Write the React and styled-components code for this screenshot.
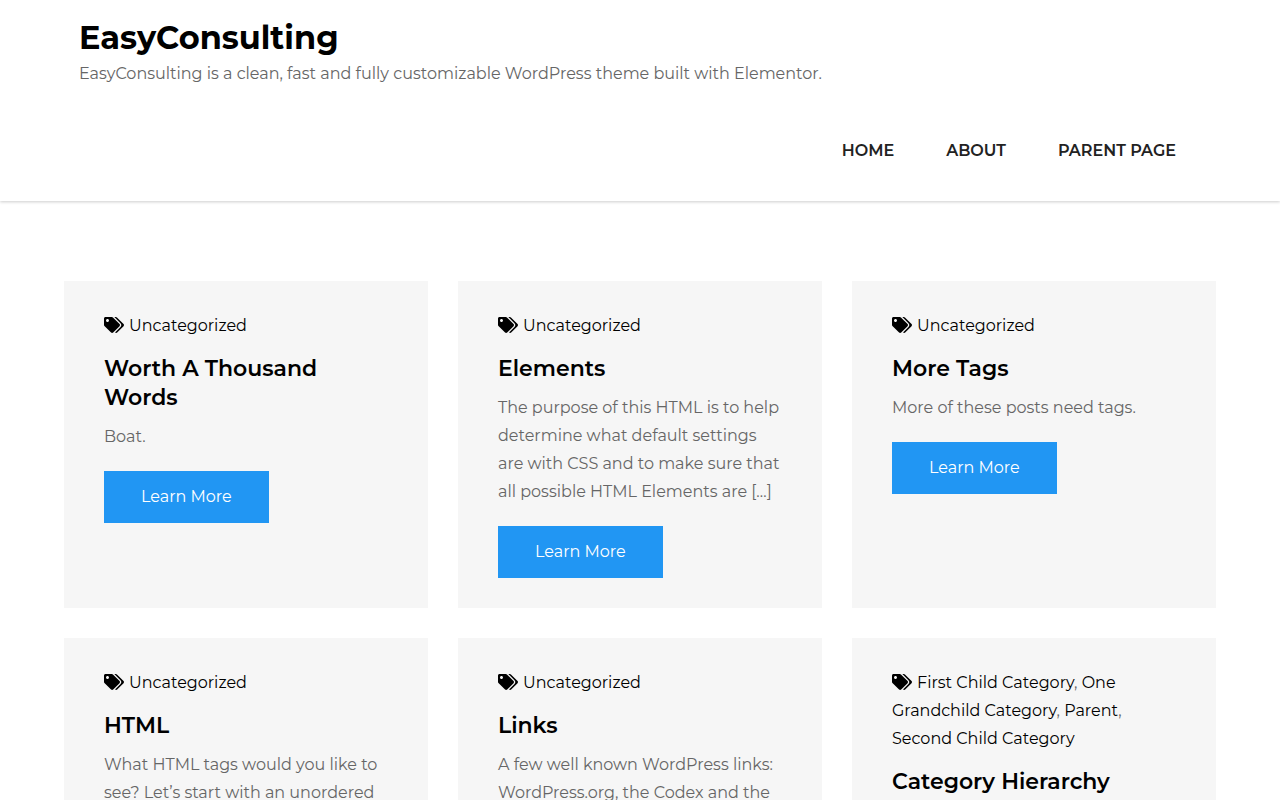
import React from 'react';
import styled, { createGlobalStyle } from 'styled-components';
import { FaTags } from 'react-icons/fa';

const GlobalStyle = createGlobalStyle`
  * {
    box-sizing: border-box;
  }

  body {
    margin: 0;
    background: #fff;
    color: #666;
    font-family: Montserrat, Inter, "Open Sans", sans-serif;
    font-size: 16px;
    font-weight: 400;
    line-height: 28px;
  }

  a {
    color: inherit;
    text-decoration: none;
  }
`;

const Header = styled.header`
  padding: 16px 0;
  background: #fff;
  box-shadow: 0 1px 3px rgba(0, 0, 0, 0.2);
`;

const Container = styled.div`
  width: 90%;
  margin: 0 auto;
`;

const Branding = styled.div`
  padding: 0 15px;
`;

const SiteTitle = styled.h1`
  margin: 0;
  color: #000;
  font-size: 32px;
  font-weight: 700;
  line-height: 44px;
`;

const Tagline = styled.p`
  margin: 0;
`;

const Nav = styled.nav`
  padding: 49px 40px 20px 15px;
`;

const Menu = styled.ul`
  display: flex;
  justify-content: flex-end;
  gap: 52px;
  margin: 0;
  padding: 0;
  list-style: none;
`;

const MenuLink = styled.a`
  color: #222;
  font-weight: 600;
  text-transform: uppercase;
`;

const Posts = styled.main`
  display: grid;
  grid-template-columns: repeat(3, 1fr);
  gap: 30px;
  padding: 80px 0;
`;

const Card = styled.article`
  padding: 31px 40px 30px;
  background: #f6f6f6;
`;

const Categories = styled.div`
  margin-bottom: 14px;

  a {
    color: #000;
  }
`;

const TagsIcon = styled(FaTags)`
  width: 20px;
  height: 16px;
  margin-right: 5px;
  color: #000;
  vertical-align: -2px;
`;

const PostTitle = styled.h2`
  margin: 0 0 11px;
  color: #000;
  font-size: 22px;
  font-weight: 600;
  line-height: 29px;
`;

const Excerpt = styled.p`
  margin: 0 0 20px;
`;

const LearnMore = styled.a`
  display: inline-block;
  padding: 12px 37px;
  background: #2196f3;
  color: #fff;
  vertical-align: top;
`;

const menu = ['Home', 'About', 'Parent Page'];

const posts = [
  {
    title: 'Worth A Thousand Words',
    categories: ['Uncategorized'],
    excerpt: 'Boat.',
  },
  {
    title: 'Elements',
    categories: ['Uncategorized'],
    excerpt:
      'The purpose of this HTML is to help determine what default settings are with CSS and to make sure that all possible HTML Elements are […]',
  },
  {
    title: 'More Tags',
    categories: ['Uncategorized'],
    excerpt: 'More of these posts need tags.',
  },
  {
    title: 'HTML',
    categories: ['Uncategorized'],
    excerpt: 'What HTML tags would you like to see? Let’s start with an unordered list […]',
  },
  {
    title: 'Links',
    categories: ['Uncategorized'],
    excerpt: 'A few well known WordPress links: WordPress.org, the Codex and the Theme […]',
  },
  {
    title: 'Category Hierarchy',
    categories: ['First Child Category', 'One Grandchild Category', 'Parent', 'Second Child Category'],
    excerpt: 'This post is in several categories.',
  },
];

const Post = ({ title, categories, excerpt }) => (
  <Card>
    <Categories>
      <TagsIcon />
      {categories.map((name, i) => (
        <React.Fragment key={name}>
          {i > 0 && ', '}
          <a href="#">{name}</a>
        </React.Fragment>
      ))}
    </Categories>
    <PostTitle>
      <a href="#">{title}</a>
    </PostTitle>
    <Excerpt>{excerpt}</Excerpt>
    <LearnMore href="#">Learn More</LearnMore>
  </Card>
);

const App = () => {
  return (
    <>
      <GlobalStyle />
      <Header>
        <Container>
          <Branding>
            <SiteTitle>
              <a href="#">EasyConsulting</a>
            </SiteTitle>
            <Tagline>
              EasyConsulting is a clean, fast and fully customizable WordPress theme built with Elementor.
            </Tagline>
          </Branding>
          <Nav>
            <Menu>
              {menu.map((item) => (
                <li key={item}>
                  <MenuLink href="#">{item}</MenuLink>
                </li>
              ))}
            </Menu>
          </Nav>
        </Container>
      </Header>
      <Container>
        <Posts>
          {posts.map((post) => (
            <Post key={post.title} {...post} />
          ))}
        </Posts>
      </Container>
    </>
  );
};

export default App;
